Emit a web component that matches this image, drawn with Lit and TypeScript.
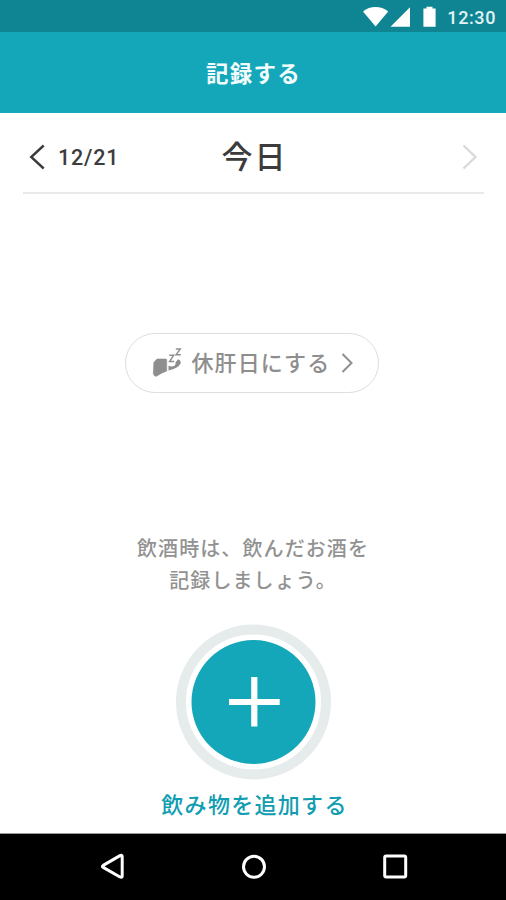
import { LitElement, html, css } from "lit";
import { customElement } from "lit/decorators.js";

@customElement("status-bar")
class StatusBar extends LitElement {
  static styles = css`
    :host {
      display: flex;
      align-items: center;
      justify-content: flex-end;
      height: 32px;
      padding-right: 10px;
      box-sizing: border-box;
      background: #0f8593;
      color: #e2f4f6;
      font: 500 18px/32px Roboto, sans-serif;
    }
    svg { display: block; fill: #fff; }
    .time { margin-left: 9px; padding-top: 3px; letter-spacing: 0.6px; }
  `;
  render() {
    return html`
      <svg width="76" height="32" viewBox="0 0 76 32">
        <path d="M1 11.500C8 5.600 19 5.600 26.200 11.500L13.600 26.400Z" />
        <path d="M48 7.200V26.700H28.500Z" />
        <path d="M61.400 8.400H64.500V6.800H70.500V8.400H73.600V26.700H61.400Z" />
      </svg>
      <span class="time">12:30</span>
    `;
  }
}

@customElement("nav-bar")
class NavBar extends LitElement {
  static styles = css`
    :host {
      display: grid;
      grid-template-columns: repeat(3, 28px);
      column-gap: 113.500px;
      justify-content: center;
      align-items: center;
      height: 67px;
      padding-left: 1px;
      background: #000;
      border-top: 1px solid #999;
      box-sizing: border-box;
    }
    svg { display: block; fill: none; stroke: #fff; stroke-width: 3; stroke-linejoin: round; }
  `;
  render() {
    return html`
      <svg width="28" height="28" viewBox="0 0 28 28"><path d="M5.200 12.400Q3.600 13.400 5.200 14.400L22 24Q24.200 25 24.200 23V3.600Q24.200 1.600 22 2.600Z" /></svg>
      <svg width="28" height="28" viewBox="0 0 28 28"><circle cx="14" cy="13.800" r="10.500" /></svg>
      <svg width="28" height="28" viewBox="0 0 28 28"><rect x="3.700" y="3" width="21" height="21" rx="1.500" /></svg>
    `;
  }
}

@customElement("app-root")
class AppRoot extends LitElement {
  static styles = css`
    :host {
      display: flex;
      flex-direction: column;
      height: 900px;
      background: #fff;
      font-family: "Noto Sans CJK JP", sans-serif;
      font-weight: 500;
    }
    svg { display: block; fill: none; }
    .header {
      height: 81px;
      padding-left: 1px;
      background: #14a7ba;
      color: #f3fcfd;
      text-align: center;
      font-size: 22.500px;
      font-weight: 700;
      line-height: 81px;
      letter-spacing: 1.200px;
    }
    .date {
      display: grid;
      grid-template-columns: 1fr auto 1fr;
      align-items: center;
      height: 81px;
      margin: 0 22px 0 23px;
      box-sizing: border-box;
      border-bottom: 2px solid #e9e9e9;
      padding: 0 6px 0 5px;
      color: #3c3c3c;
    }
    .prev { display: flex; align-items: center; gap: 10px; padding-top: 8px; }
    .prev span { font: 500 21.500px/24px Roboto, sans-serif; letter-spacing: 0.800px; padding-top: 2px; }
    .today { font-size: 31px; line-height: 40px; letter-spacing: 2px; padding: 5px 0 0 3px; }
    .next { justify-self: end; padding-top: 8px; margin-right: -1px; }
    .rest {
      display: flex;
      align-items: center;
      align-self: center;
      width: 254px;
      height: 60px;
      margin: 139px 3px 0 0;
      padding-left: 26px;
      box-sizing: border-box;
      border: 1.500px solid #dedede;
      border-radius: 30px;
      color: #8e8e8e;
      font-size: 22px;
      letter-spacing: 1.100px;
      white-space: nowrap;
    }
    .rest span { margin: -4px 10px 0 9px; }
    .hint {
      margin: 139px 0 0;
      padding-left: 0;
      text-align: center;
      font-size: 20px;
      line-height: 32px;
      letter-spacing: 1.100px;
      color: #929292;
    }
    .add {
      display: flex;
      flex-direction: column;
      align-items: center;
      margin-top: 28px;
      color: #109db1;
      font-size: 22px;
      line-height: 32px;
      letter-spacing: 1.300px;
    }
    .add span { margin-top: 7px; padding-left: 3px; }
    nav-bar { margin-top: auto; }
  `;
  render() {
    return html`
      <status-bar></status-bar>
      <div class="header">記録する</div>
      <div class="date">
        <div class="prev">
          <svg width="20" height="28" viewBox="0 0 20 28"><path d="M15.700 2.500L3.200 14L15.700 25.500" stroke="#3c3c3c" stroke-width="2.400" /></svg>
          <span>12/21</span>
        </div>
        <div class="today">今日</div>
        <div class="next">
          <svg width="18" height="28" viewBox="0 0 18 28"><path d="M2.500 2.500L14.500 14L2.500 25.500" stroke="#d9d9d9" stroke-width="2.400" /></svg>
        </div>
      </div>
      <div class="rest">
        <svg width="31" height="32" viewBox="0 0 31 32">
          <path d="M1.800 15.500L5 12H13.700Q14.700 12 14.700 13.300V24Q9 26 4.500 29.300Q2 29.500 1.300 26.500Z" fill="#8e8e8e" stroke="#8e8e8e" stroke-width="0.600" stroke-linejoin="round" />
          <path d="M16.500 18.800Q22 20.500 23.500 17.500V15.500L26 12.200Q29.500 13.500 28.500 16.800Q26 21.500 16.500 23.500Z" fill="#8e8e8e" />
          <path d="M17.300 8.200H21.700L17.500 14.500H22.200M23.800 2H28.300L24 7.800H28.800" stroke="#8e8e8e" stroke-width="1.400" />
        </svg>
        <span>休肝日にする</span>
        <svg width="14" height="22" viewBox="0 0 14 22"><path d="M2.500 2L11.500 11L2.500 20" stroke="#8e8e8e" stroke-width="2" /></svg>
      </div>
      <p class="hint">飲酒時は、飲んだお酒を<br />記録しましょう。</p>
      <div class="add">
        <svg width="156" height="156" viewBox="0 0 156 156">
          <circle cx="78.500" cy="78" r="72.500" stroke="#e6eceb" stroke-width="10" />
          <circle cx="78.500" cy="78" r="62" fill="#14a7ba" />
          <path d="M54 78H104.700M79.300 53V102.500" stroke="#fff" stroke-width="6.200" />
        </svg>
        <span>飲み物を追加する</span>
      </div>
      <nav-bar></nav-bar>
    `;
  }
}
